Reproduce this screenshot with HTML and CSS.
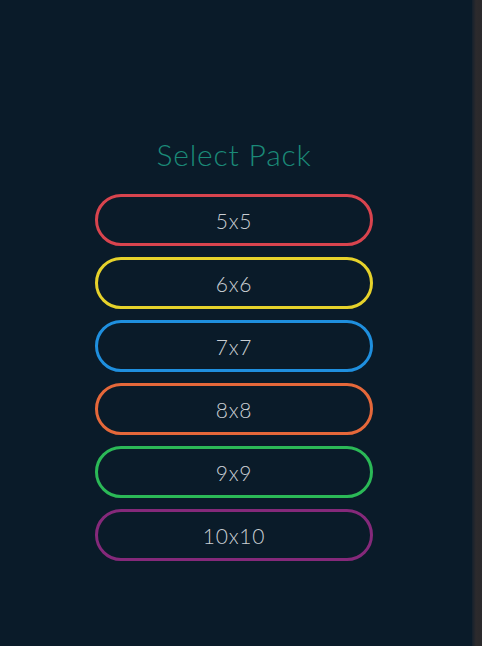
FILE: index.html
```html
<!DOCTYPE html>
<html lang="en">
<head>
    <meta charset="UTF-8">
    <meta name="viewport" content="width=device-width, initial-scale=1.0">
    <title>Select Pack</title>
    <link rel="stylesheet" href="styles.css">
</head>
<body>
    <div class="screen">
        <div class="pack-container">
            <h1 class="title">Select Pack</h1>
            <button class="pack red">5x5</button>
            <button class="pack yellow">6x6</button>
            <button class="pack blue">7x7</button>
            <button class="pack orange">8x8</button>
            <button class="pack green">9x9</button>
            <button class="pack purple">10x10</button>
        </div>
    </div>
    <div class="edge"></div>
</body>
</html>
```

FILE: styles.css
```css
body {
    display: flex;
    height: 100vh;
    margin: 0;
    background-color: #0a1b29;
    font-family: Lato, "Open Sans", sans-serif;
}
.screen {
    flex: 1;
    display: flex;
    justify-content: center;
    padding-right: 4px;
}
.pack-container {
    display: flex;
    flex-direction: column;
    align-items: center;
    gap: 11px;
    padding-top: 134px;
}
.title {
    margin: 0 0 9px;
    font-size: 30px;
    font-weight: 300;
    line-height: 40px;
    color: #1b8a78;
    letter-spacing: 0.8px;
}
.pack {
    width: 278px;
    height: 52px;
    background: transparent;
    border: 3px solid;
    border-radius: 26px;
    color: #c9ced3;
    font-family: Lato, "Open Sans", sans-serif;
    font-size: 21px;
    font-weight: 300;
    letter-spacing: 0.8px;
    cursor: pointer;
}
.red { border-color: #d8444e; }
.yellow { border-color: #e6d22b; }
.blue { border-color: #1f8fde; }
.orange { border-color: #e5683a; }
.green { border-color: #2bb957; }
.purple { border-color: #85297a; }
.edge {
    width: 10px;
    background: linear-gradient(to right, #14202c, #2c2a2d 40%, #2a292b);
}
```
